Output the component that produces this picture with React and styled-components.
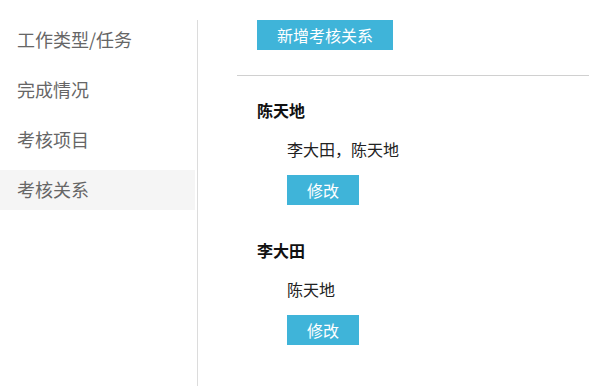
import React from "react";
import styled, { createGlobalStyle } from "styled-components";

const GlobalStyle = createGlobalStyle`
  body {
    margin: 0;
    background: #fff;
    font-family: "Noto Sans CJK SC", "Liberation Sans", sans-serif;
  }
`;

const menu = ["工作类型/任务", "完成情况", "考核项目", "考核关系"];

const relations = [
  { name: "陈天地", members: "李大田，陈天地" },
  { name: "李大田", members: "陈天地" }
];

export default function App() {
  return (
    <Page>
      <GlobalStyle />
      <Sidebar>
        {menu.map(item => (
          <MenuItem key={item} active={item === "考核关系"}>
            {item}
          </MenuItem>
        ))}
      </Sidebar>
      <Main>
        <Toolbar>
          <Button wide>新增考核关系</Button>
        </Toolbar>
        <Divider />
        {relations.map(r => (
          <Section key={r.name}>
            <Name>{r.name}</Name>
            <Members>{r.members}</Members>
            <Actions>
              <Button>修改</Button>
            </Actions>
          </Section>
        ))}
      </Main>
    </Page>
  );
}

const Page = styled.div`
  display: flex;
  min-height: 386px;
`;

const Sidebar = styled.div`
  width: 198px;
  box-sizing: border-box;
  margin-top: 20px;
  padding-right: 2px;
  border-right: 1px solid #dcdcdc;
`;

const MenuItem = styled.div`
  height: 40px;
  line-height: 38px;
  padding-bottom: 2px;
  box-sizing: border-box;
  margin-bottom: 10px;
  padding-left: 17px;
  font-size: 18px;
  color: #666;
  background: ${p => (p.active ? "#f5f5f5" : "transparent")};
`;

const Main = styled.div`
  flex: 1;
  margin-left: 39px;
  padding-top: 20px;
`;

const Toolbar = styled.div`
  padding-left: 20px;
`;

const Button = styled.button`
  display: block;
  width: ${p => (p.wide ? "136px" : "72px")};
  height: 30px;
  padding: 0;
  border: none;
  background: #3fb4d9;
  color: #fff;
  font-family: inherit;
  font-size: 16px;
  line-height: 30px;
`;

const Divider = styled.div`
  height: 1px;
  background: #d0d0d0;
  margin-top: 25px;
  margin-bottom: 22px;
`;

const Section = styled.div`
  padding-left: 20px;
  margin-bottom: 33px;
`;

const Name = styled.div`
  font-size: 16px;
  line-height: 24px;
  font-weight: bold;
  color: #111;
`;

const Members = styled.div`
  margin-top: 15px;
  padding-left: 30px;
  font-size: 16px;
  line-height: 24px;
  color: #222;
`;

const Actions = styled.div`
  margin-top: 14px;
  padding-left: 30px;
`;
